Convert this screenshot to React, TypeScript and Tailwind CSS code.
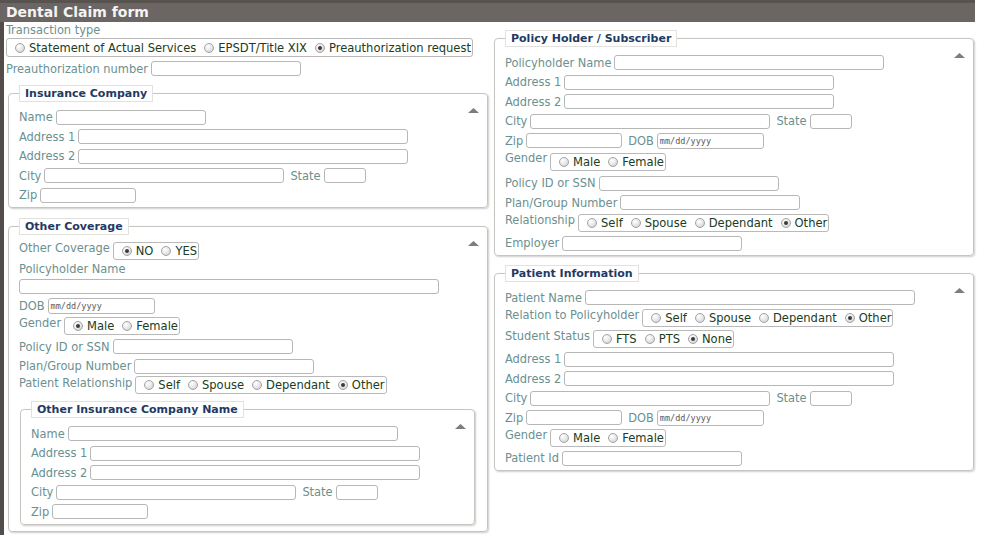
import React from "react";

type P = { children?: React.ReactNode; className?: string };

function Lbl({ children, className = "" }: P) {
  return (
    <span className={`text-[12.7px] leading-[16px] text-[#6b9090] whitespace-nowrap mr-[3px] ${className}`}>
      {children}
    </span>
  );
}

function Inp({ className = "" }: { className?: string }) {
  return (
    <input
      type="text"
      className={`h-[15px] shrink-0 border border-[#b7b7b7] rounded-[3px] bg-white outline-none ${className}`}
    />
  );
}

function DateInp() {
  return (
    <div className="h-[16px] w-[107px] shrink-0 border border-[#b7b7b7] rounded-[3px] bg-white flex items-center pl-[2px]">
      <span className="font-['DejaVu_Sans_Mono',monospace] [font-stretch:normal] text-[8.5px] leading-[10px] text-[#5a5a5a]">mm/dd/yyyy</span>
    </div>
  );
}

function Dot({ on }: { on?: boolean }) {
  return (
    <span className="w-[10px] h-[10px] rounded-full border border-[#a3a3a3] bg-[radial-gradient(circle_at_35%_30%,#ffffff_0%,#e8e8e8_50%,#c6c6c6_100%)] flex items-center justify-center shrink-0">
      {on && <span className="w-[4px] h-[4px] rounded-full bg-[#3a3a3a]" />}
    </span>
  );
}

function Group({ opts, on, className = "" }: { opts: string[]; on: number; className?: string }) {
  return (
    <div className={`flex items-center h-[18px] w-fit border border-[#b9b9b9] rounded-[3px] bg-white pr-[1px] ${className}`}>
      {opts.map((o, i) => (
        <span key={o} className="flex items-center ml-[8px]">
          <Dot on={i === on} />
          <span className="ml-[4px] text-[12.8px] leading-[16px] text-[#203c1c] whitespace-nowrap">{o}</span>
        </span>
      ))}
    </div>
  );
}

function Row({ children, className = "" }: P) {
  return <div className={`flex items-center h-[19.5px] ${className}`}>{children}</div>;
}

function RRow({
  label,
  opts,
  on,
  h = "h-[21px]",
  bm = "mt-[1px]",
}: {
  label: string;
  opts: string[];
  on: number;
  h?: string;
  bm?: string;
}) {
  return (
    <div className={`flex items-start ${h}`}>
      <Lbl className="-mt-[1px]">{label}</Lbl>
      <Group opts={opts} on={on} className={bm} />
    </div>
  );
}

function Tri() {
  return (
    <svg className="absolute right-[-2px] top-[6px]" width="11" height="5" viewBox="0 0 11 5">
      <polygon points="0,5 5.5,0 11,5" fill="#7d7d7d" />
    </svg>
  );
}

function Section({ title, className = "", children }: { title: string; className?: string; children: React.ReactNode }) {
  return (
    <fieldset
      className={`border border-[#c8c5c1] rounded-[4px] shadow-[1px_1px_2px_rgba(0,0,0,0.2)] px-[10px] pb-[2px] min-w-0 ${className}`}
    >
      <legend className="h-[17px] px-[5px] border border-[#e3e1de] bg-white text-[11px] leading-[15px] font-bold text-[#1f3a64] font-['DejaVu_Sans',sans-serif] [font-stretch:normal]">
        {title}
      </legend>
      <div className="relative pt-[6px]">
        <Tri />
        {children}
      </div>
    </fieldset>
  );
}

const REL = ["Self", "Spouse", "Dependant", "Other"];
const GEN = ["Male", "Female"];

export default function App() {
  return (
    <div className="w-[981px] h-[535px] overflow-hidden bg-white flex flex-col font-['DejaVu_Sans_Condensed','DejaVu_Sans',sans-serif] [font-stretch:condensed]">
      <div className="h-[22px] w-[975px] shrink-0 bg-[#6b6563] border-t-[3px] border-[#58534f] pl-[6px] text-[14px] leading-[18px] font-bold text-[#f4f4f4] font-['DejaVu_Sans',sans-serif] [font-stretch:normal]">
        Dental Claim form
      </div>
      <div className="flex flex-1 min-h-0">
        <div className="w-[4px] bg-[#524d4b] shrink-0" />
        {/* Left column */}
        <div className="w-[481px] ml-[2px] flex flex-col shrink-0">
          <div className="text-[12.7px] leading-[16px] text-[#6b9090]">Transaction type</div>
          <Group
            className="h-[19px]"
            opts={["Statement of Actual Services", "EPSDT/Title XIX", "Preauthorization request"]}
            on={2}
          />
          <Row className="mt-[2px]">
            <Lbl>Preauthorization number</Lbl>
            <Inp className="w-[150px]" />
          </Row>

          <Section title="Insurance Company" className="ml-[2px] w-[480px] mt-[6px]">
            <Row>
              <Lbl>Name</Lbl>
              <Inp className="w-[150px]" />
            </Row>
            <Row>
              <Lbl>Address 1</Lbl>
              <Inp className="w-[330px]" />
            </Row>
            <Row>
              <Lbl>Address 2</Lbl>
              <Inp className="w-[330px]" />
            </Row>
            <Row>
              <Lbl>City</Lbl>
              <Inp className="w-[240px]" />
              <Lbl className="ml-[6px]">State</Lbl>
              <Inp className="w-[42px]" />
            </Row>
            <Row>
              <Lbl>Zip</Lbl>
              <Inp className="w-[96px]" />
            </Row>
          </Section>

          <Section title="Other Coverage" className="ml-[2px] w-[480px] mt-[10px] pb-[6px]">
            <RRow label="Other Coverage" opts={["NO", "YES"]} on={0} />
            <div className="h-[14px] flex items-center">
              <Lbl>Policyholder Name</Lbl>
            </div>
            <div className="flex items-center h-[20.5px]">
              <Inp className="w-[420px]" />
            </div>
            <Row>
              <Lbl>DOB</Lbl>
              <DateInp />
            </Row>
            <RRow label="Gender" opts={GEN} on={0} />
            <Row>
              <Lbl>Policy ID or SSN</Lbl>
              <Inp className="w-[180px]" />
            </Row>
            <Row>
              <Lbl>Plan/Group Number</Lbl>
              <Inp className="w-[180px]" />
            </Row>
            <RRow label="Patient Relationship" opts={REL} on={3} bm="mt-0" />

            <Section title="Other Insurance Company Name" className="ml-[1px] w-[455px] mt-[4px]">
              <Row>
                <Lbl>Name</Lbl>
                <Inp className="w-[330px]" />
              </Row>
              <Row>
                <Lbl>Address 1</Lbl>
                <Inp className="w-[330px]" />
              </Row>
              <Row>
                <Lbl>Address 2</Lbl>
                <Inp className="w-[330px]" />
              </Row>
              <Row>
                <Lbl>City</Lbl>
                <Inp className="w-[240px]" />
                <Lbl className="ml-[6px]">State</Lbl>
                <Inp className="w-[42px]" />
              </Row>
              <Row>
                <Lbl>Zip</Lbl>
                <Inp className="w-[96px]" />
              </Row>
            </Section>
          </Section>
        </div>

        {/* Right column */}
        <div className="w-[480px] ml-[7px] flex flex-col pt-[8px] shrink-0">
          <Section title="Policy Holder / Subscriber" className="w-[480px]">
            <Row>
              <Lbl>Policyholder Name</Lbl>
              <Inp className="w-[270px]" />
            </Row>
            <Row>
              <Lbl>Address 1</Lbl>
              <Inp className="w-[270px]" />
            </Row>
            <Row>
              <Lbl>Address 2</Lbl>
              <Inp className="w-[270px]" />
            </Row>
            <Row>
              <Lbl>City</Lbl>
              <Inp className="w-[240px]" />
              <Lbl className="ml-[6px]">State</Lbl>
              <Inp className="w-[42px]" />
            </Row>
            <Row>
              <Lbl>Zip</Lbl>
              <Inp className="w-[96px]" />
              <Lbl className="ml-[6px]">DOB</Lbl>
              <DateInp />
            </Row>
            <RRow label="Gender" opts={GEN} on={-1} h="h-[23px]" bm="mt-[2px]" />
            <Row>
              <Lbl>Policy ID or SSN</Lbl>
              <Inp className="w-[180px]" />
            </Row>
            <Row>
              <Lbl>Plan/Group Number</Lbl>
              <Inp className="w-[180px]" />
            </Row>
            <RRow label="Relationship" opts={REL} on={3} />
            <Row>
              <Lbl>Employer</Lbl>
              <Inp className="w-[180px]" />
            </Row>
          </Section>

          <Section title="Patient Information" className="w-[480px] mt-[9px]">
            <Row>
              <Lbl>Patient Name</Lbl>
              <Inp className="w-[330px]" />
            </Row>
            <RRow label="Relation to Policyholder" opts={REL} on={3} />
            <RRow label="Student Status" opts={["FTS", "PTS", "None"]} on={2} />
            <Row>
              <Lbl>Address 1</Lbl>
              <Inp className="w-[330px]" />
            </Row>
            <Row>
              <Lbl>Address 2</Lbl>
              <Inp className="w-[330px]" />
            </Row>
            <Row>
              <Lbl>City</Lbl>
              <Inp className="w-[240px]" />
              <Lbl className="ml-[6px]">State</Lbl>
              <Inp className="w-[42px]" />
            </Row>
            <Row>
              <Lbl>Zip</Lbl>
              <Inp className="w-[96px]" />
              <Lbl className="ml-[6px]">DOB</Lbl>
              <DateInp />
            </Row>
            <RRow label="Gender" opts={GEN} on={-1} />
            <Row>
              <Lbl>Patient Id</Lbl>
              <Inp className="w-[180px]" />
            </Row>
          </Section>
        </div>
      </div>
    </div>
  );
}
